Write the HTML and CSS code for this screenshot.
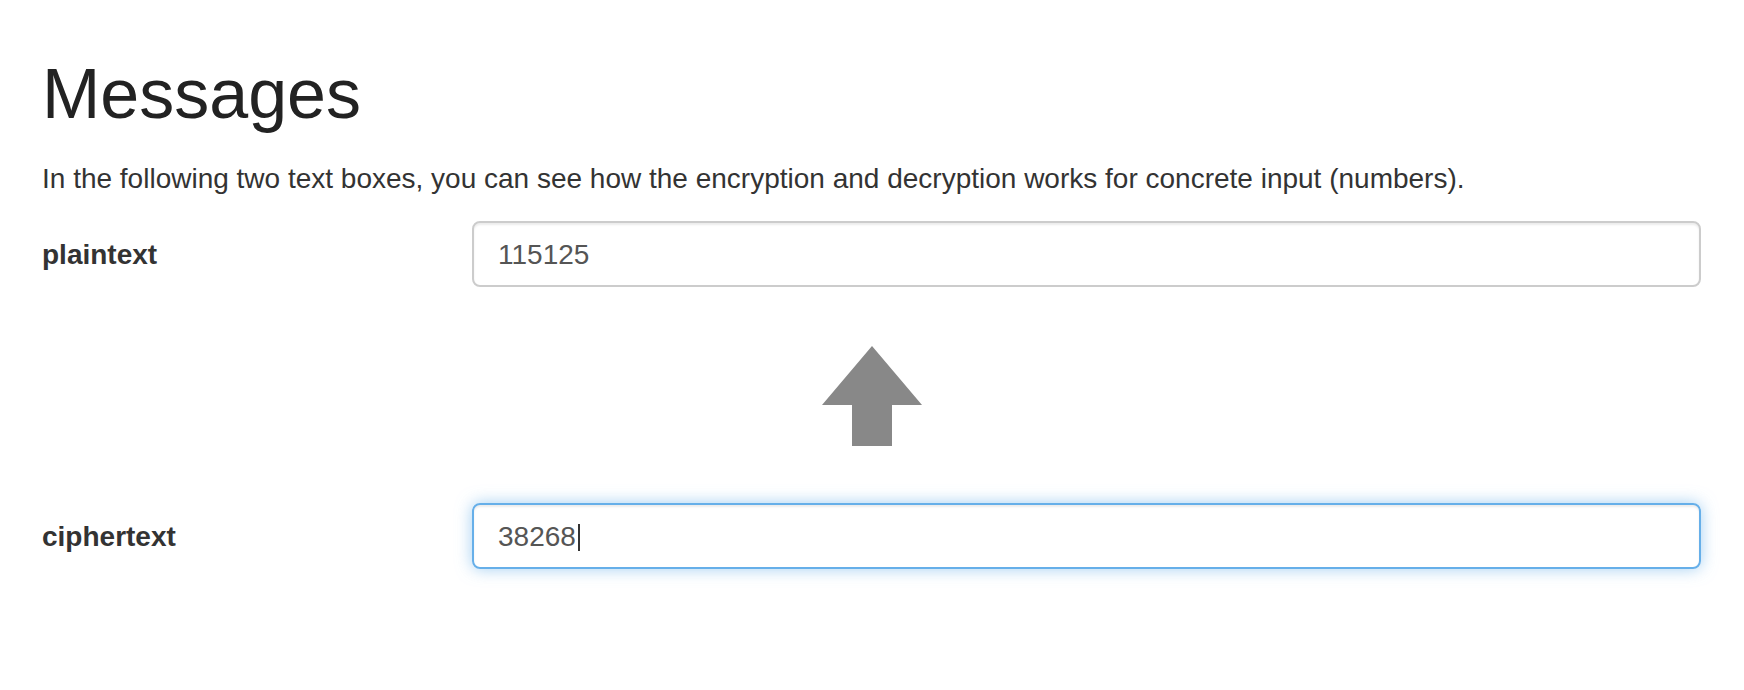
FILE: index.html
```html
<!DOCTYPE html>
<html lang="en">
<head>
<meta charset="utf-8">
<title>Messages</title>
<link rel="stylesheet" href="styles.css">
</head>
<body>
<main class="container">
  <h1 class="title">Messages</h1>
  <p class="intro">In the following two text boxes, you can see how the encryption and decryption works for concrete input (numbers).</p>
  <div class="form-row">
    <label class="label">plaintext</label>
    <div class="field" role="textbox">115125</div>
  </div>
  <div class="arrow-wrap">
    <svg class="arrow" width="100" height="100" viewBox="0 0 100 100" aria-hidden="true">
      <polygon points="50,0 100,59 70,59 70,100 30,100 30,59 0,59" fill="#888888"/>
    </svg>
  </div>
  <div class="form-row">
    <label class="label">ciphertext</label>
    <div class="field focused" role="textbox">38268<span class="caret"></span></div>
  </div>
</main>
</body>
</html>
```

FILE: styles.css
```css
html, body {
  margin: 0;
  padding: 0;
  background: #ffffff;
}

body {
  font-family: "Liberation Sans", Arial, Helvetica, sans-serif;
  font-size: 28px;
  line-height: 40px;
  color: #333333;
}

.container {
  padding: 56px 43px 40px 42px;
}

.title {
  margin: 0 0 27px 0;
  font-size: 70px;
  line-height: 76px;
  font-weight: 400;
  color: #222222;
}

.intro {
  margin: 0 0 22px 0;
}

.form-row {
  display: flex;
  align-items: center;
}

.label {
  width: 430px;
  flex: none;
  font-weight: 700;
  padding-top: 2px;
}

.field {
  flex: 1;
  box-sizing: border-box;
  height: 66px;
  padding: 2px 24px 0 24px;
  border: 2px solid #cccccc;
  border-radius: 8px;
  color: #555555;
  display: flex;
  align-items: center;
  box-shadow: inset 0 2px 2px rgba(0, 0, 0, 0.075);
}

.field.focused {
  border-color: #66afe9;
  box-shadow: inset 0 2px 2px rgba(0, 0, 0, 0.075), 0 0 16px rgba(102, 175, 233, 0.6);
}

.caret {
  display: inline-block;
  width: 2px;
  height: 27px;
  margin-left: 2px;
  background: #333333;
}

.arrow-wrap {
  display: flex;
  justify-content: center;
  padding: 59px 0 57px 0;
}

.arrow {
  display: block;
}
```
